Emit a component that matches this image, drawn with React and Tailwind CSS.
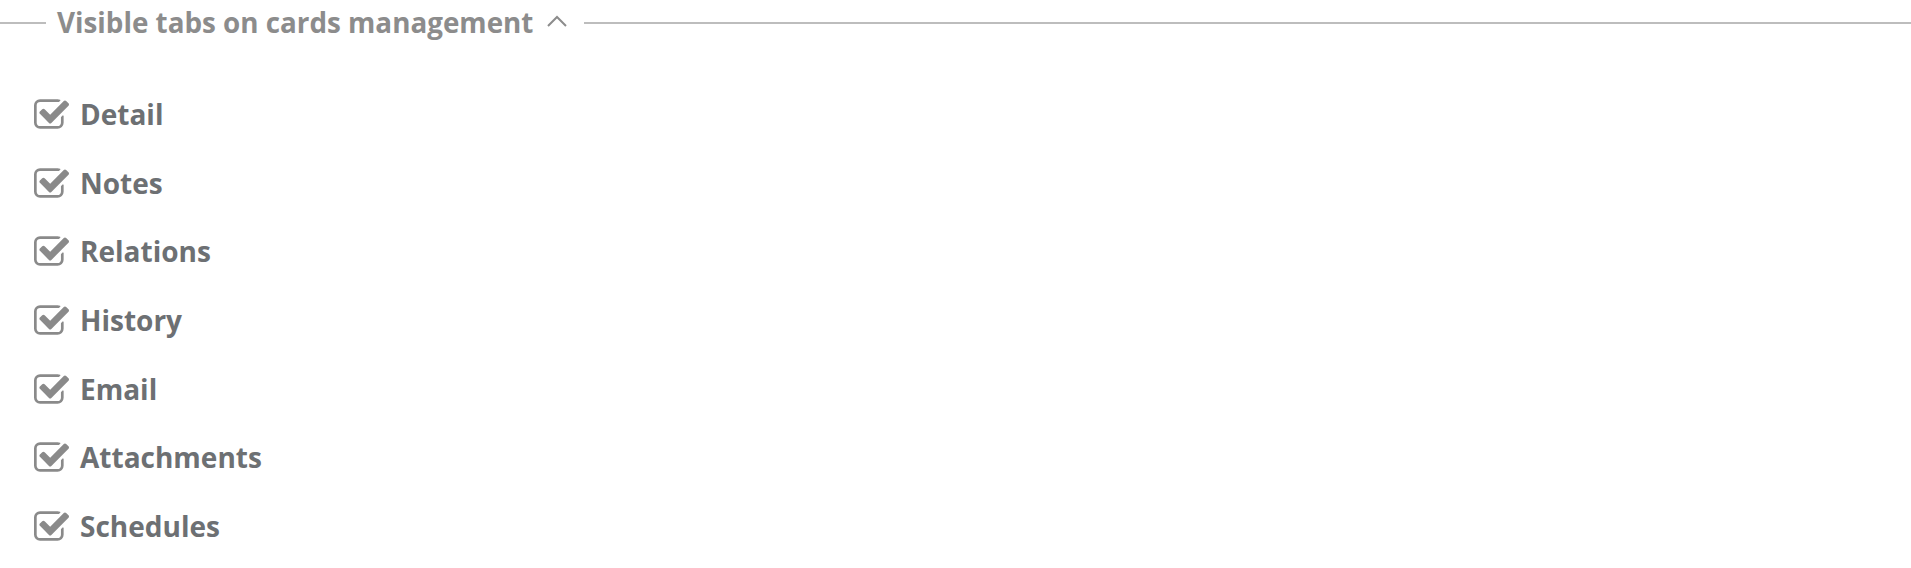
import React from "react";

function CheckIcon() {
  return (
    <svg width="35" height="30" viewBox="64 128 1663 1408" className="shrink-0 fill-[#8a8a8a]">
      <path d="M1472 930v318q0 119-84.5 203.5t-203.5 84.5h-832q-119 0-203.5-84.5t-84.5-203.5v-832q0-119 84.5-203.5t203.5-84.5h832q63 0 117 25 15 7 18 23 3 17-9 29l-49 49q-10 10-23 10-3 0-9-2-23-6-45-6h-832q-66 0-113 47t-47 113v832q0 66 47 113t113 47h832q66 0 113-47t47-113v-254q0-13 9-22l64-64q10-10 23-10 6 0 12 3 20 8 20 29zm231-489l-814 814q-24 24-57 24t-57-24l-430-430q-24-24-24-57t24-57l110-110q24-24 57-24t57 24l263 263 647-647q24-24 57-24t57 24l110 110q24 24 24 57t-24 57z" />
    </svg>
  );
}

const items = ["Detail", "Notes", "Relations", "History", "Email", "Attachments", "Schedules"];

export default function App() {
  return (
    <div className="w-[1911px] h-[568px] bg-white overflow-hidden" style={{ fontFamily: '"Open Sans", sans-serif' }}>
      <div className="flex items-center h-[45px]">
        <div className="w-[46px] h-[2px] bg-[#bdbdbd]" />
        <div className="ml-[11px] text-[27.8px] font-bold text-[#8c8c8c] leading-none">Visible tabs on cards management</div>
        <svg width="22" height="13" viewBox="0 0 22 13" className="ml-[13px] mb-[4px]">
          <polyline points="2,12 11,3 20,12" fill="none" stroke="#8c8c8c" strokeWidth="2" />
        </svg>
        <div className="ml-[16px] flex-1 h-[2px] bg-[#bdbdbd]" />
      </div>
      <div className="mt-[35px] pl-[34px] flex flex-col">
        {items.map((t) => (
          <div key={t} className="h-[68.6px] flex items-center">
            <CheckIcon />
            <span className="ml-[11px] text-[28px] font-bold text-[#6d7073] leading-none">{t}</span>
          </div>
        ))}
      </div>
    </div>
  );
}
